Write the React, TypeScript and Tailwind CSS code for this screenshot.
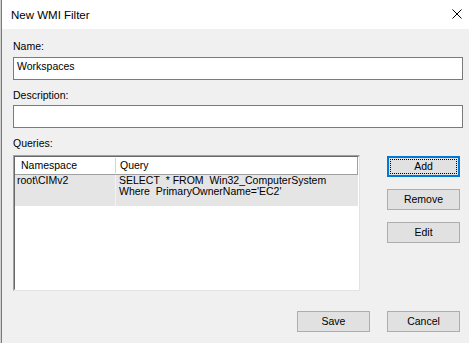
import React from 'react';

const SANS = "font-['Liberation_Sans',Arial,sans-serif]";

function Button({ label, focused = false }: { label: string; focused?: boolean }) {
  return (
    <button
      type="button"
      className={`h-[21px] w-[73px] bg-[#e1e1e1] text-[10.5px] leading-[13px] text-black ${
        focused
          ? 'border-2 border-[#0078d7] outline-1 outline-dotted outline-black outline-offset-[-4px]'
          : 'border border-[#adadad]'
      }`}
    >
      {label}
    </button>
  );
}

export default function App() {
  return (
    <div className={`w-[469px] h-[343px] flex flex-col border-l border-[#d0d0d0] ${SANS}`}>
      <div className="flex flex-col flex-1 border-l border-[#7a7a7a]">
        {/* Title bar */}
        <div className="h-[29px] shrink-0 bg-white flex items-center justify-between pl-[9px] pr-[7px]">
          <span className="text-[11.5px] leading-[14px] text-black">New WMI Filter</span>
          <svg width="10" height="10" viewBox="0 0 10 10" className="mb-[2px]">
            <path d="M0.5 0.5 L9.5 9.5 M9.5 0.5 L0.5 9.5" stroke="#000" strokeWidth="1" fill="none" />
          </svg>
        </div>

        {/* Body */}
        <div className="flex-1 bg-[#f0f0f0] pl-[11px] pr-[6px] flex flex-col text-[10.5px] leading-[13px] text-black">
          <div className="mt-[11px] h-[13px]">Name:</div>
          <div className="mt-[4px] h-[23px] bg-white border border-[#7a7a7a] pl-[3px] pt-[2px]">Workspaces</div>

          <div className="mt-[9px] h-[13px]">Description:</div>
          <div className="mt-[3px] h-[23px] bg-white border border-[#7a7a7a]" />

          <div className="mt-[9px] h-[13px]">Queries:</div>

          <div className="mt-[5px] flex items-start">
            {/* List view */}
            <div className="w-[347px] h-[136px] border border-t-[#a0a0a0] border-l-[#a0a0a0] border-r-[#e3e3e3] border-b-[#e3e3e3]">
              <div className="h-full bg-white border border-t-[#696969] border-l-[#696969] border-r-white border-b-white flex flex-col">
                <div className="h-[18px] flex border-b border-r border-[#a0a0a0]">
                  <div className="w-[101px] pl-[6px] flex items-center border-r border-[#d5d5d5] my-px">Namespace</div>
                  <div className="flex-1 pl-[4px] flex items-center">Query</div>
                </div>
                <div className="h-[31px] flex bg-[#e5e5e5]">
                  <div className="w-[101px] pl-[2px] leading-[11px] border-r border-[#f3f3f3]">root\CIMv2</div>
                  <div className="flex-1 pl-[3px] leading-[11px]">
                    <div>SELECT&nbsp; * FROM&nbsp; Win32_ComputerSystem</div>
                    <div>Where&nbsp; PrimaryOwnerName='EC2'</div>
                  </div>
                </div>
              </div>
            </div>

            {/* Side buttons */}
            <div className="ml-[27px] mt-px flex flex-col gap-[12px]">
              <Button label="Add" focused />
              <Button label="Remove" />
              <Button label="Edit" />
            </div>
          </div>

          <div className="mt-[20px] mr-[3px] flex justify-end gap-[17px]">
            <Button label="Save" />
            <Button label="Cancel" />
          </div>
        </div>
      </div>
    </div>
  );
}
